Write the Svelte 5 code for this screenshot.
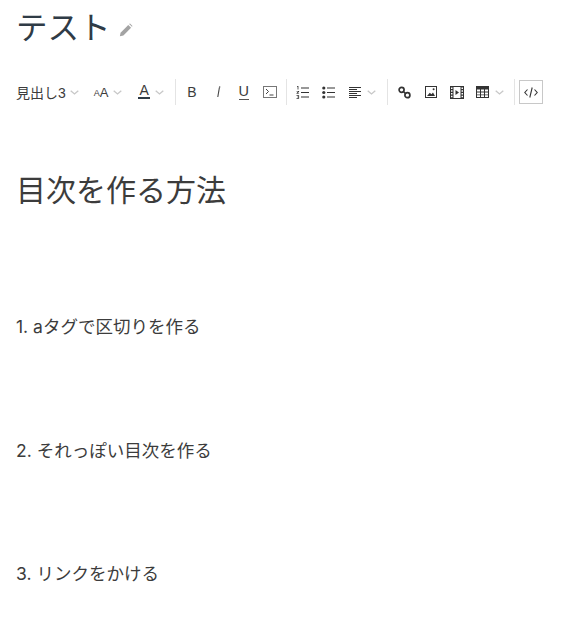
<script>
  const lines = ['1. aタグで区切りを作る', '2. それっぽい目次を作る', '3. リンクをかける'];
</script>

<div class="page">
  <div class="title-row">
    <h1>テスト</h1>
    <svg class="pencil" width="14" height="14" viewBox="0 0 16 16">
      <path d="M1 15l.8-4L10.6 2.2l3.2 3.2L5 14.2z" fill="#a3a3a3" />
      <path d="M11.6 1.2l1-.6 2.8 2.8-.6 1z" fill="#a3a3a3" />
    </svg>
  </div>

  <div class="toolbar">
    <div class="group first">
      <span class="btn"><span class="label">見出し3</span><svg class="caret" viewBox="0 0 9 5"><path d="M.7.7L4.5 4l3.8-3.3" /></svg></span>
      <span class="btn size"><span class="small-a">A</span><span class="big-a">A</span><svg class="caret" viewBox="0 0 9 5"><path d="M.7.7L4.5 4l3.8-3.3" /></svg></span>
      <span class="btn color"><span class="under-a">A</span><svg class="caret" viewBox="0 0 9 5"><path d="M.7.7L4.5 4l3.8-3.3" /></svg></span>
    </div>

    <div class="group">
      <span class="btn icon"><span>B</span></span>
      <span class="btn icon">
        <svg width="8" height="12" viewBox="0 0 8 12" fill="none" stroke="#444" stroke-width="1.1">
          <path d="M5.4 1.5L3.8 11" />
          <circle cx="5.7" cy="1" r=".7" fill="#444" stroke="none" />
        </svg>
      </span>
      <span class="btn icon"><span class="underline">U</span></span>
      <span class="btn icon">
        <svg width="14" height="12" viewBox="0 0 14 12" fill="none" stroke="#444">
          <rect x=".5" y=".5" width="13" height="11" stroke="#777" />
          <path d="M3 3l2.5 2.5L3 8M6.5 9h4" />
        </svg>
      </span>
    </div>

    <div class="group">
      <span class="btn icon">
        <svg width="13" height="13" viewBox="0 0 13 13" fill="#333">
          <path d="M5 1.5h8v1H5zM5 6h8v1H5zM5 10.5h8v1H5z" />
          <path d="M1 0h1.4v3.6h-.8V.8H1zM.5 5h2.6v.7L1.6 7.2h1.5v.6H.5v-.6l1.6-1.6H.5zM.5 9.3h2.6v3.4H.5V12h1.8v-.7H1v-.6h1.3V10H.5z" />
        </svg>
      </span>
      <span class="btn icon">
        <svg width="13" height="13" viewBox="0 0 13 13" fill="#333">
          <circle cx="1.8" cy="2" r="1.6" /><circle cx="1.8" cy="6.5" r="1.6" /><circle cx="1.8" cy="11" r="1.6" />
          <path d="M5 1.5h8v1H5zM5 6h8v1H5zM5 10.5h8v1H5z" />
        </svg>
      </span>
      <span class="btn">
        <span class="slot">
          <svg width="12" height="11" viewBox="0 0 12 11" fill="#333">
            <path d="M0 0h12v1H0zM0 2h8v1H0zM0 4h12v1H0zM0 6h8v1H0zM0 8h12v1H0zM0 10h8v1H0z" />
          </svg>
        </span>
        <svg class="caret tight" viewBox="0 0 9 5"><path d="M.7.7L4.5 4l3.8-3.3" /></svg>
      </span>
    </div>

    <div class="group">
      <span class="btn icon">
        <svg width="13" height="13" viewBox="0 0 13 13" fill="none" stroke="#333" stroke-width="1.7">
          <circle cx="3.6" cy="3.8" r="2.5" />
          <circle cx="9.4" cy="9.2" r="2.5" />
          <path d="M5 5.2l3 2.8" />
        </svg>
      </span>
      <span class="btn icon">
        <svg width="12" height="12" viewBox="0 0 12 12" fill="none" stroke="#333">
          <rect x=".5" y=".5" width="11" height="11" />
          <path d="M2 10l2.8-3.2 1.6 1.5L8 6.4 10 10z" fill="#333" stroke="none" />
          <circle cx="8.6" cy="3.3" r="1" fill="#333" stroke="none" />
        </svg>
      </span>
      <span class="btn icon">
        <svg width="14" height="13" viewBox="0 0 14 13" fill="#333">
          <path d="M0 0h14v13H0z" />
          <path d="M1 1.5h1.5V3H1zM1 4.2h1.5v1.5H1zM1 7h1.5v1.5H1zM1 9.8h1.5v1.5H1zM11.5 1.5H13V3h-1.5zM11.5 4.2H13v1.5h-1.5zM11.5 7H13v1.5h-1.5zM11.5 9.8H13v1.5h-1.5zM3.5 1h7v11h-7z" fill="#fff" />
          <path d="M5.5 4l3.5 2.5L5.5 9z" />
        </svg>
      </span>
      <span class="btn">
        <span class="slot">
          <svg width="13" height="12" viewBox="0 0 13 12" fill="#333">
            <path d="M0 0h13v12H0z" />
            <path d="M1 3.5h3v2H1zM5 3.5h3v2H5zM9 3.5h3v2H9zM1 6.5h3v2H1zM5 6.5h3v2H5zM9 6.5h3v2H9zM1 9.3h3V11H1zM5 9.3h3V11H5zM9 9.3h3V11H9z" fill="#fff" />
          </svg>
        </span>
        <svg class="caret tight" viewBox="0 0 9 5"><path d="M.7.7L4.5 4l3.8-3.3" /></svg>
      </span>
    </div>

    <div class="group last">
      <span class="code-btn">
        <svg width="14" height="11" viewBox="0 0 14 11" fill="none" stroke="#333" stroke-width="1.1">
          <path d="M3.5 2.5L.8 5.5l2.7 3M10.5 2.5l2.7 3-2.7 3M8.2.5L5.8 10.5" />
        </svg>
      </span>
    </div>
  </div>

  <div class="content">
    <h3>目次を作る方法</h3>
    {#each lines as line}
      <p>{line}</p>
    {/each}
  </div>
</div>

<style>
  :global(body) {
    margin: 0;
    background: #fff;
    overflow: hidden;
  }

  .page {
    height: 617px;
    overflow: hidden;
    padding-left: 16px;
    font-family: "Liberation Sans", "Noto Sans CJK JP", sans-serif;
    color: #333;
  }

  .title-row {
    display: flex;
    align-items: center;
    height: 56px;
  }

  h1 {
    margin: 0;
    font-size: 31.5px;
    font-weight: 400;
    color: #2f3b46;
    line-height: 56px;
  }

  .pencil {
    margin-left: 8px;
    margin-top: 3px;
  }

  .toolbar {
    display: flex;
    align-items: center;
    height: 26px;
    margin-top: 23px;
  }

  .group {
    display: flex;
    align-items: center;
    height: 26px;
    padding: 0 3px;
    border-right: 1px solid #e4e4e4;
  }

  .group.first {
    padding: 0 11px 0 0;
  }

  .group:nth-child(3) {
    padding-right: 11px;
  }

  .group:nth-child(4) {
    padding: 0 10px 0 4px;
  }

  .group.last {
    border-right: none;
    padding-left: 4px;
  }

  .btn {
    display: flex;
    align-items: center;
    justify-content: center;
    height: 24px;
    font-size: 14px;
    color: #3c3c3c;
  }

  .btn.icon,
  .slot {
    display: flex;
    align-items: center;
    justify-content: center;
    width: 26px;
  }

  .caret {
    width: 9px;
    height: 5px;
    margin-left: 4px;
    fill: none;
    stroke: #c8c8c8;
    stroke-width: 1.3;
  }

  .caret.tight {
    margin-left: -1px;
  }

  .btn.size {
    margin-left: 15px;
  }

  .small-a {
    font-size: 9px;
    margin-top: 2px;
  }

  .big-a {
    font-size: 13px;
  }

  .btn.size .caret {
    margin-left: 5px;
  }

  .btn.color {
    margin-left: 16px;
  }

  .btn.color .caret {
    margin-left: 5px;
  }

  .under-a {
    font-size: 14px;
    line-height: 14px;
    padding: 0 1px;
    border-bottom: 2px solid #2f3b46;
    margin-top: -2px;
  }

  .underline {
    font-size: 14.5px;
    line-height: 14px;
    border-bottom: 1px solid #555;
    padding-bottom: 1px;
  }

  .code-btn {
    display: flex;
    align-items: center;
    justify-content: center;
    box-sizing: border-box;
    width: 24px;
    height: 24px;
    border: 1px solid #c8c8c8;
  }

  h3 {
    margin: 65px 0 0;
    font-size: 30px;
    font-weight: 400;
    line-height: 42px;
    color: #3c3c3c;
  }

  p {
    margin: 0;
    font-family: Inter, "Noto Sans CJK JP", sans-serif;
    font-size: 17.5px;
    line-height: 24px;
    padding-top: 99.5px;
    color: #3c3c3c;
  }

  h3 + p {
    padding-top: 103px;
  }
</style>
